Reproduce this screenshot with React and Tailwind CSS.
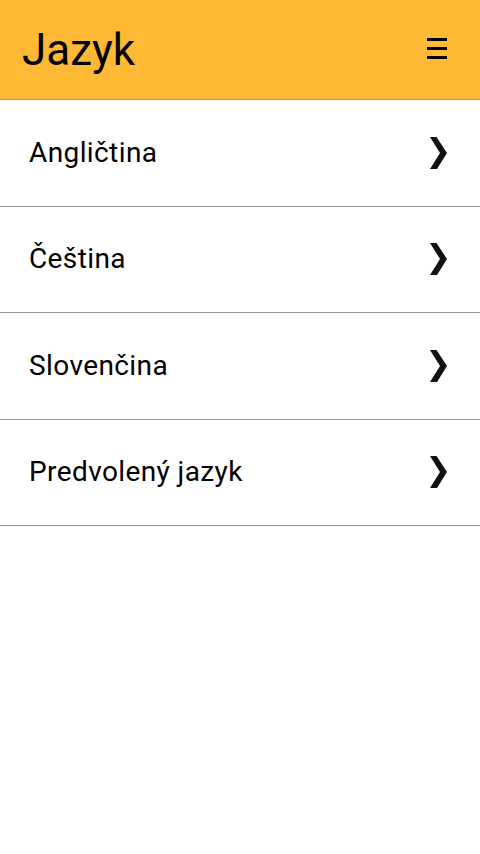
import React from 'react';

const languages = ['Angličtina', 'Čeština', 'Slovenčina', 'Predvolený jazyk'];

function Chevron() {
  return (
    <svg width="17" height="32" viewBox="0 0 17 32" className="block">
      <polygon points="0,0 6.5,0 17,16 7,32 0,32 10,16" fill="#111" />
    </svg>
  );
}

export default function App() {
  return (
    <div className="min-h-screen bg-white text-black" style={{ fontFamily: 'Roboto, "Noto Sans", sans-serif' }}>
      {/* Hlavička */}
      <header className="h-[100px] bg-[#ffb934] border-b border-[#999999] flex items-center justify-between pl-[22px] pr-[33px]">
        <h1 className="text-[44px] leading-none font-normal">Jazyk</h1>
        <button className="flex flex-col gap-[6px] w-[20px] -mt-[2px]">
          <span className="block h-[3px] w-full bg-black"></span>
          <span className="block h-[3px] w-full bg-black"></span>
          <span className="block h-[3px] w-full bg-black"></span>
        </button>
      </header>

      {/* Zoznam jazykov */}
      <ul>
        {languages.map((lang) => (
          <li
            key={lang}
            className="h-[106.5px] border-b border-[#999999] flex items-center justify-between pl-[29px] pr-[33px]"
          >
            <span className="text-[28px] leading-none tracking-[0.4px]">{lang}</span>
            <Chevron />
          </li>
        ))}
      </ul>
    </div>
  );
}
